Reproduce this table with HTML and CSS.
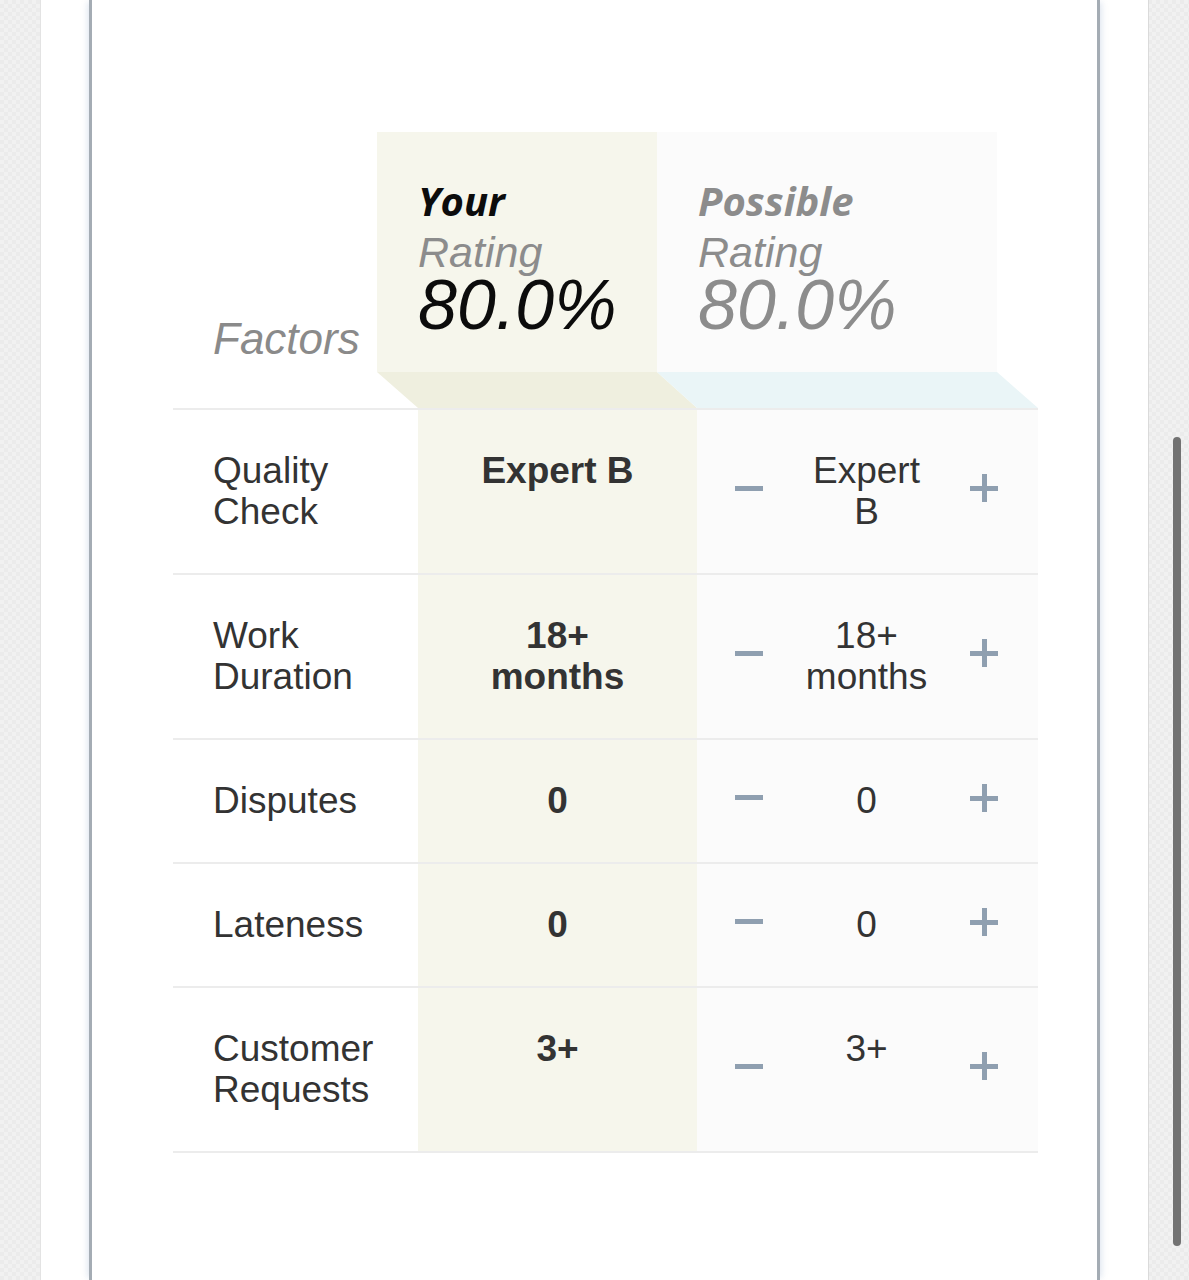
FILE: index.html
```html
<!DOCTYPE html>
<html lang="en">
<head>
<meta charset="utf-8">
<title>Rating factors</title>
<link rel="stylesheet" href="styles.css">
</head>
<body>
<div class="frame">
  <div class="box">
    <div class="table">
      <div class="head">
        <div class="head-factors">Factors</div>
        <div class="head-right">
          <div class="head-boxes">
            <div class="hbox hbox-your">
              <div class="h-title">Your</div>
              <div class="h-sub">Rating</div>
              <div class="h-val">80.0%</div>
            </div>
            <div class="hbox hbox-pos">
              <div class="h-title">Possible</div>
              <div class="h-sub">Rating</div>
              <div class="h-val">80.0%</div>
            </div>
          </div>
          <svg class="band" width="661" height="36" viewBox="0 0 661 36">
            <polygon points="0,0 280,0 320,36 41,36" fill="#efefdf"/>
            <polygon points="280,0 620,0 661,36 320,36" fill="#eaf5f7"/>
          </svg>
        </div>
      </div>

      <div class="row">
        <div class="c-factor">Quality<br>Check</div>
        <div class="c-your">Expert B</div>
        <div class="c-pos">
          <span class="minus"></span>
          <span class="pos-text">Expert B</span>
          <span class="plus"></span>
        </div>
      </div>
      <div class="row">
        <div class="c-factor">Work<br>Duration</div>
        <div class="c-your">18+ months</div>
        <div class="c-pos">
          <span class="minus"></span>
          <span class="pos-text">18+ months</span>
          <span class="plus"></span>
        </div>
      </div>
      <div class="row">
        <div class="c-factor">Disputes</div>
        <div class="c-your">0</div>
        <div class="c-pos">
          <span class="minus"></span>
          <span class="pos-text">0</span>
          <span class="plus"></span>
        </div>
      </div>
      <div class="row">
        <div class="c-factor">Lateness</div>
        <div class="c-your">0</div>
        <div class="c-pos">
          <span class="minus"></span>
          <span class="pos-text">0</span>
          <span class="plus"></span>
        </div>
      </div>
      <div class="row">
        <div class="c-factor">Customer<br>Requests</div>
        <div class="c-your">3+</div>
        <div class="c-pos">
          <span class="minus"></span>
          <span class="pos-text">3+</span>
          <span class="plus"></span>
        </div>
      </div>
    </div>
  </div>
</div>
<div class="scroll-thumb"></div>
</body>
</html>
```

FILE: styles.css
```css
html, body {
  margin: 0;
  padding: 0;
}

body {
  background-color: #f1f1f1;
  background-image:
    linear-gradient(45deg, #ebebeb 25%, transparent 25%, transparent 75%, #ebebeb 75%),
    linear-gradient(45deg, #ebebeb 25%, transparent 25%, transparent 75%, #ebebeb 75%);
  background-size: 8px 8px;
  background-position: 0 0, 4px 4px;
  font-family: "Liberation Sans", Arial, sans-serif;
  height: 1280px;
  overflow: hidden;
}

.frame {
  margin: 0 40px 0 40px;
  width: 1109px;
  height: 1280px;
  background: #ffffff;
  border-left: 1px solid #e3e3e3;
  border-right: 1px solid #dadada;
  padding: 0 48px;
  box-sizing: border-box;
}

.box {
  height: 1280px;
  border-left: 3px solid #a4acb4;
  border-right: 3px solid #a4acb4;
  box-shadow: -4px 0 6px -2px rgba(190, 205, 225, 0.45), 4px 0 6px -2px rgba(190, 205, 225, 0.45);
  padding: 132px 0 0 81px;
  box-sizing: border-box;
}

.table {
  width: 865px;
  color: #333333;
  font-size: 37px;
  line-height: 41px;
}

/* header */
.head {
  display: flex;
  border-bottom: 2px solid #ececec;
}

.head-factors {
  width: 204px;
  box-sizing: border-box;
  padding: 0 0 44px 40px;
  display: flex;
  align-items: flex-end;
  font-style: italic;
  font-size: 44px;
  line-height: 50px;
  color: #8a8a8a;
}

.head-right {
  display: flex;
  flex-direction: column;
}

.head-boxes {
  display: flex;
  height: 240px;
}

.hbox {
  box-sizing: border-box;
  padding: 44px 0 0 41px;
}

.hbox-your {
  width: 280px;
  background: #f6f6ec;
}

.hbox-pos {
  width: 340px;
  background: #fbfbfb;
}

.h-title {
  font-family: "Open Sans", "Liberation Sans", sans-serif;
  font-weight: 700;
  font-style: italic;
  font-size: 40px;
  line-height: 50px;
}

.h-sub {
  font-style: italic;
  font-size: 43px;
  line-height: 52px;
  color: #8c8c8c;
}

.h-val {
  font-family: "Liberation Sans Narrow", "Liberation Sans", sans-serif;
  font-style: italic;
  font-size: 70px;
  line-height: 54px;
}

.hbox-your .h-title,
.hbox-your .h-val {
  color: #0c0c0c;
}

.hbox-pos .h-title,
.hbox-pos .h-val {
  color: #8c8c8c;
}

.band {
  display: block;
}

/* rows */
.row {
  display: grid;
  grid-template-columns: 245px 279px 341px;
  border-bottom: 2px solid #ececec;
}

.c-factor {
  padding: 40px 0 41px 40px;
}

.c-your {
  background: #f6f6ec;
  padding: 40px 45px 41px;
  text-align: center;
  font-weight: 700;
}

.c-pos {
  background: #fbfbfb;
  display: grid;
  grid-template-columns: 28px 1fr 28px;
  column-gap: 40px;
  padding: 0 40px 0 38px;
}

.pos-text {
  padding: 40px 0 41px;
  text-align: center;
}

.minus {
  align-self: center;
  height: 5px;
  width: 28px;
  background: #8f9fb0;
  margin-top: -7px;
}

.plus {
  align-self: center;
  position: relative;
  width: 28px;
  height: 28px;
  margin-top: -7px;
}

.plus::before,
.plus::after {
  content: "";
  position: absolute;
  background: #8f9fb0;
}

.plus::before {
  left: 0;
  right: 0;
  top: 12px;
  height: 5px;
}

.plus::after {
  top: 0;
  bottom: 0;
  left: 12px;
  width: 5px;
}

.scroll-thumb {
  position: fixed;
  left: 1173px;
  top: 437px;
  width: 8px;
  height: 809px;
  border-radius: 4px;
  background: #727272;
}
```
